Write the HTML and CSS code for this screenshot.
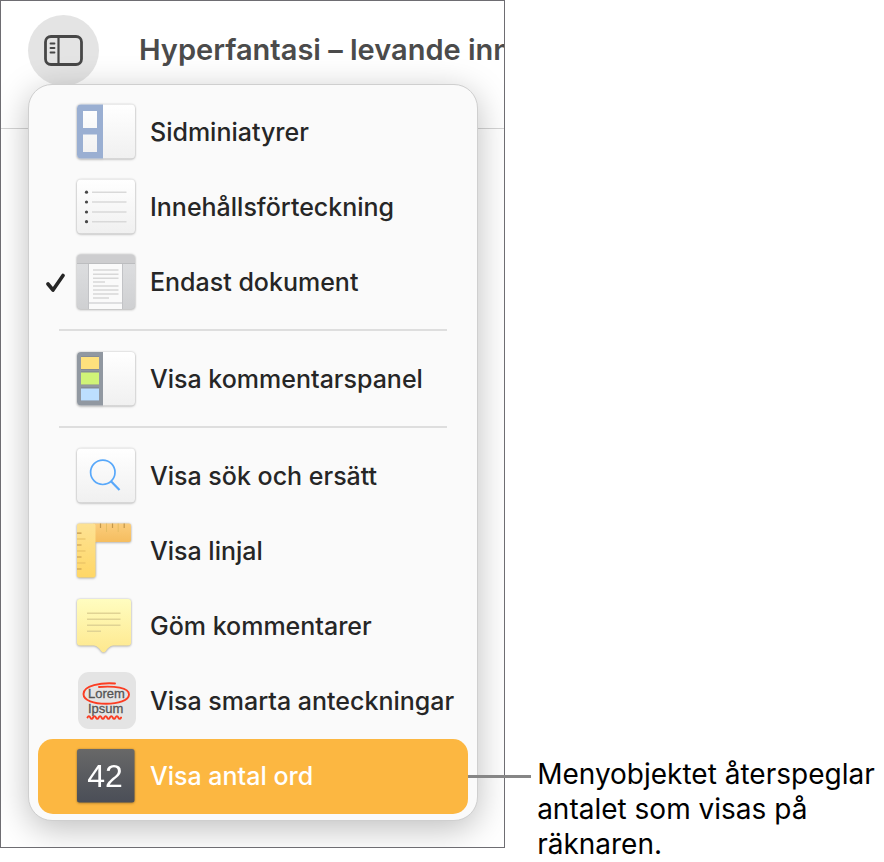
FILE: index.html
```html
<!DOCTYPE html>
<html lang="sv">
<head>
  <meta charset="UTF-8" />
  <meta name="viewport" content="width=device-width,initial-scale=1.0"/>
  <title>Innehållsmenyn</title>
  <link rel="stylesheet" href="styles.css">
</head>
<body>
  <div class="figure">
    <div class="window">
      <header class="toolbar">
        <button class="view-btn" type="button" aria-label="Innehåll">
          <svg width="40" height="32" viewBox="0 0 40 32" fill="none" stroke="#474747">
            <rect x="1.500" y="1.500" width="36" height="28" rx="5.500" stroke-width="2.800"/>
            <path d="M14.500 2v27" stroke-width="2.200"/>
            <path d="M6.500 8.500h4M6.500 13h4M6.500 17.500h4" stroke-width="1.800" stroke-linecap="round"/>
          </svg>
        </button>
        <h1 class="doc-title">Hyperfantasi – levande inn</h1>
      </header>
      <div class="menu" role="menu">
        <button class="item" type="button" role="menuitemradio" aria-checked="false">
          <span class="check"></span>
          <svg class="icon" viewBox="0 0 62 61">
            <defs>
              <linearGradient id="paper" x2="0" y2="1"><stop stop-color="#fff"/><stop offset="1" stop-color="#f0f0f0"/></linearGradient>
              <linearGradient id="side" x2="0" y2="1"><stop stop-color="#dfe0e2"/><stop offset="1" stop-color="#cfd0d2"/></linearGradient>
              <linearGradient id="ruler-v" x2="0" y2="1"><stop stop-color="#fde294"/><stop offset="1" stop-color="#ffd766"/></linearGradient>
              <linearGradient id="ruler-h" x2="0" y2="1"><stop stop-color="#fbcd7c"/><stop offset="1" stop-color="#f5bd5f"/></linearGradient>
              <linearGradient id="note" x2="0" y2="1"><stop stop-color="#fffdc0"/><stop offset="1" stop-color="#fee88e"/></linearGradient>
              <linearGradient id="dark" x2="0" y2="1"><stop stop-color="#686868"/><stop offset="1" stop-color="#4a4e57"/></linearGradient>
            </defs>
            <rect x="2" y="2.500" width="58" height="54" rx="4" fill="url(#paper)"/>
            <path fill="#9aafd2" fill-rule="evenodd" d="M6 2.500h22v54H6a4 4 0 0 1-4-4v-46a4 4 0 0 1 4-4zM8 9v17h14V9zM8 32.500V50h14V32.500z"/>
          </svg>
          <span class="label">Sidminiatyrer</span>
        </button>
        <button class="item" type="button" role="menuitemradio" aria-checked="false">
          <span class="check"></span>
          <svg class="icon" viewBox="0 0 62 61">
            <rect x="2" y="2.500" width="58" height="54" rx="4" fill="url(#paper)"/>
            <path stroke="#d9d9d9" stroke-width="1.600" d="M17 15.200h34.500M17 25h34.500M17 35h34.500M17 44.700h34.500"/>
            <g fill="#474747">
              <circle cx="11.500" cy="15.200" r="1.600"/>
              <circle cx="11.500" cy="25" r="1.600"/>
              <circle cx="11.500" cy="35" r="1.600"/>
              <circle cx="11.500" cy="44.700" r="1.600"/>
            </g>
          </svg>
          <span class="label">Innehållsförteckning</span>
        </button>
        <button class="item" type="button" role="menuitemradio" aria-checked="true">
          <span class="check">
            <svg width="20" height="20" viewBox="0 0 20 20" fill="none" stroke="#262626" stroke-width="3.600" stroke-linecap="round" stroke-linejoin="round"><path d="M2 11l5 6L17 2.500"/></svg>
          </span>
          <svg class="icon" viewBox="0 0 62 61">
            <rect x="2" y="2.500" width="58" height="54.500" rx="4" fill="url(#side)"/>
            <path fill="#cdcdcf" d="M6 2.500h50a4 4 0 0 1 4 4v5H2v-5a4 4 0 0 1 4-4z"/>
            <path stroke="#bcbdbf" d="M2 11.500h58"/>
            <rect x="14" y="12" width="33.500" height="45" fill="#fafafa"/>
            <path fill="none" stroke="#c2c3c6" d="M13.500 12v45M47.500 12v45M14 51h33"/>
            <path stroke="#d8d8d8" stroke-width="1.500" d="M18 18h25.500M18 22.300h25.500M18 26.300h25.500M18 30h12M18 34h25.500M18 38h25.500M18 42h25.500M18 46h16"/>
          </svg>
          <span class="label">Endast dokument</span>
        </button>
        <hr class="separator">
        <button class="item" type="button" role="menuitem">
          <span class="check"></span>
          <svg class="icon" viewBox="0 0 62 61">
            <rect x="2" y="3" width="58" height="53.500" rx="4" fill="url(#paper)"/>
            <path fill="#9198a1" d="M6 3h22v53.500H6a4 4 0 0 1-4-4V7a4 4 0 0 1 4-4z"/>
            <path fill="#858c95" d="M6 7h18v14H6zM6 22h18v14H6zM6 38h18v14H6z"/>
            <path fill="#fee17d" d="M6 8h18v12H6z"/>
            <path fill="#d0f378" d="M6 23.500h18v12H6z"/>
            <path fill="#bcdfff" d="M6 39.500h18v12H6z"/>
          </svg>
          <span class="label">Visa kommentarspanel</span>
        </button>
        <hr class="separator">
        <button class="item" type="button" role="menuitem">
          <span class="check"></span>
          <svg class="icon" viewBox="0 0 62 61">
            <rect x="2" y="2.500" width="58" height="54" rx="4" fill="url(#paper)"/>
            <g fill="none" stroke="#58a8fa">
              <circle cx="27.800" cy="26.300" r="12.200" stroke-width="1.700"/>
              <path stroke-width="2.200" d="M36 35.200l8.500 8.800"/>
            </g>
          </svg>
          <span class="label">Visa sök och ersätt</span>
        </button>
        <button class="item" type="button" role="menuitem">
          <span class="check"></span>
          <svg class="icon" viewBox="0 0 62 61">
            <path fill="url(#ruler-h)" d="M18 2.500h36a2 2 0 0 1 2 2v14.500a2 2 0 0 1-2 2H18z"/>
            <rect x="2" y="2.500" width="18.500" height="54" rx="2" fill="url(#ruler-v)"/>
            <path stroke="#c3984c" stroke-width="1.200" d="M2 12.200h4.500M2 24h4.500M2 36h4.500M2 48h4.500M25.500 2.500V7M37.500 2.500V7M49.200 2.500V7"/>
            <path stroke="#e5bd63" d="M2 18h8.500M2 30h8.500M2 42h8.500M31.500 2.500v8.500M43.200 2.500v8.500"/>
          </svg>
          <span class="label">Visa linjal</span>
        </button>
        <button class="item" type="button" role="menuitem">
          <span class="check"></span>
          <svg class="icon" viewBox="0 0 62 61">
            <path fill="url(#note)" d="M5 3h48a3 3 0 0 1 3 3v40.500a3 3 0 0 1-3 3H40c-5 0-6.500 2-9 5.200-1.700 2.200-3.300 2.200-5 0-2.500-3.200-4-5.200-9-5.200H5a3 3 0 0 1-3-3V6a3 3 0 0 1 3-3z"/>
            <path stroke="#e0d394" stroke-width="1.500" d="M12 17.300h33.500M12 23.200h33.500M12 29.200h33.500M12 35.200h14"/>
          </svg>
          <span class="label">Göm kommentarer</span>
        </button>
        <button class="item" type="button" role="menuitem">
          <span class="check"></span>
          <svg class="icon flat" viewBox="0 0 62 61">
            <rect x="3" y="1" width="58" height="57" rx="11" fill="#e4e4e4"/>
            <text class="lorem" x="13" y="27">Lorem</text>
            <text class="lorem" x="13" y="42">Ipsum</text>
            <g fill="none" stroke="#fb3d23" stroke-linecap="round">
              <path stroke-width="1.900" d="M40 12.500C26 11.500 8.500 14.500 8.500 23c0 6.500 10.500 9.800 22.500 9.800S54 29.500 54 23.500c0-7-15-8.700-30-7.500"/>
              <path stroke-width="1.900" d="M12.500 46.500q1.400-2.800 2.800 0t2.800 0 2.800 0 2.800 0 2.800 0 2.800 0 2.800 0 2.800 0 2.800 0 2.800 0 2.800 0 2.800 0"/>
            </g>
          </svg>
          <span class="label">Visa smarta anteckningar</span>
        </button>
        <button class="item selected" type="button" role="menuitem">
          <span class="check"></span>
          <svg class="icon" viewBox="0 0 62 61">
            <rect x="2" y="3" width="57.500" height="53.500" rx="2.500" fill="url(#dark)"/>
            <text class="count" x="30" y="40.500">42</text>
          </svg>
          <span class="label">Visa antal ord</span>
        </button>
      </div>
    </div>
    <p class="callout">Menyobjektet återspeglar antalet som visas på räknaren.</p>
  </div>
</body>
</html>
```
FILE: styles.css
```css
:root {
  --frame: #6e6d72;
  --accent: #fcb741;
  --text: #262626;
  --line: #dedede;
  --font-base: "Inter", "Liberation Sans", sans-serif;
}
* { box-sizing: border-box; margin: 0; padding: 0; }
body {
  font-family: var(--font-base);
  background: #fff;
  color: var(--text);
}
.figure {
  display: grid;
  grid-template-columns: minmax(0, 4fr) minmax(0, 3fr);
}

/* Fönstret */
.window {
  margin-bottom: 14px;
  padding-bottom: 26px;
  border: 1px solid var(--frame);
  overflow: hidden;
}
.toolbar {
  display: flex;
  align-items: flex-start;
  gap: 40px;
  height: 128px;
  padding: 14px 0 0 27px;
  border-bottom: 1px solid #d4d4d4;
}
.view-btn {
  display: flex;
  flex: none;
  align-items: center;
  justify-content: center;
  width: 71px;
  height: 71px;
  border: none;
  border-radius: 50%;
  background: #e4e4e4;
}
.doc-title {
  font-size: 29px;
  font-weight: 600;
  line-height: 70px;
  color: #4b4b4b;
  white-space: nowrap;
}

/* Menyn */
.menu {
  position: relative;
  margin: -45px 26px 0 27px;
  padding: 10px 9px 6px;
  border: 1px solid #cfcfcf;
  border-radius: 24px;
  background: #fafafa;
  box-shadow: 0 8px 34px rgba(0,0,0,0.26);
}
.item {
  display: flex;
  align-items: center;
  width: 100%;
  height: 75px;
  border: none;
  border-radius: 15px;
  background: none;
  color: var(--text);
  font-family: inherit;
  font-size: 25px;
  font-weight: 500;
  text-align: left;
  white-space: nowrap;
}
.item.selected {
  background: var(--accent);
  color: #fff;
}
.label { padding-bottom: 2px; }
.check {
  display: flex;
  flex: none;
  width: 37px;
  padding-left: 8px;
}
.icon {
  flex: none;
  width: 62px;
  height: 61px;
  margin-right: 13px;
  filter: drop-shadow(0 0 1px rgba(0,0,0,0.2)) drop-shadow(0 1px 1px rgba(0,0,0,0.2));
}
.icon.flat { filter: none; }
.separator {
  height: 2px;
  margin: 9px 21px 11px;
  border: none;
  background: var(--line);
}
.lorem {
  font-family: "Liberation Sans", sans-serif;
  font-size: 13px;
  fill: #555;
  stroke: #555;
  stroke-width: 0.3px;
}
.count {
  font-family: "Liberation Sans", sans-serif;
  font-size: 32px;
  fill: #fff;
  text-anchor: middle;
}

/* Bildtext med linje */
.callout {
  position: relative;
  align-self: end;
  padding-left: 32px;
  color: #000;
  font-size: 28px;
  line-height: 35px;
}
.callout::before {
  content: '';
  position: absolute;
  top: 18px;
  left: -37px;
  width: 63px;
  height: 3px;
  background: #868686;
}
```
